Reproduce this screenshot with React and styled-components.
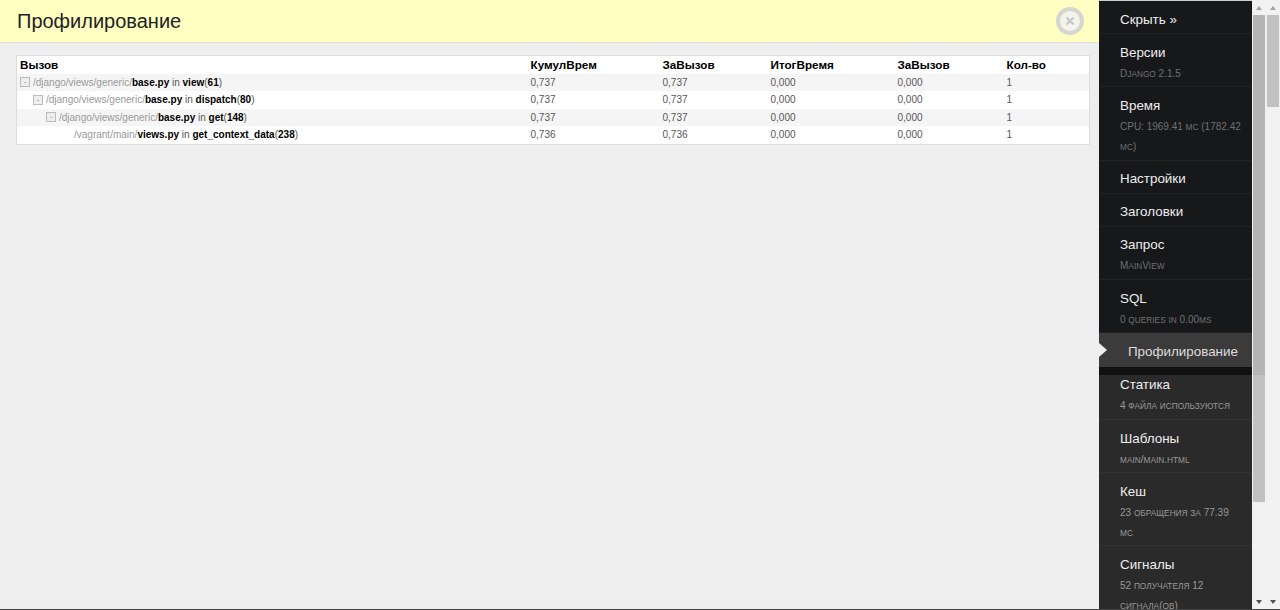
import styled, { createGlobalStyle } from 'styled-components';

const GlobalStyle = createGlobalStyle`
  html, body {
    margin: 0;
    padding: 0;
    height: 100%;
    overflow: hidden;
    background: #eee;
  }
`;

const Page = styled.div`
  display: flex;
  height: 610px;
  box-sizing: border-box;
  border-bottom: 1px solid #444;
  font-family: 'Liberation Sans', Arial, sans-serif;
  overflow: hidden;
`;
const Main = styled.main`
  flex: 1;
  min-width: 0;
  background: #eee;
`;
const Header = styled.header`
  display: flex;
  align-items: center;
  justify-content: space-between;
  height: 43px;
  box-sizing: border-box;
  padding: 0 15px 0 17px;
  background: #ffffc2;
  border-bottom: 1px solid #ddd;
`;
const Title = styled.h3`
  margin: 0;
  font-size: 20px;
  font-weight: 400;
  color: #222;
`;
const CloseButton = styled.button`
  display: flex;
  align-items: center;
  justify-content: center;
  width: 28px;
  height: 28px;
  padding: 0;
  border: 4px solid #d6d6d0;
  border-radius: 50%;
  background: #f4f4ec;
  color: #c8c8c8;
`;
const Content = styled.div`
  padding: 12px 9px 0 16px;
`;
const Table = styled.table`
  width: 100%;
  table-layout: fixed;
  border-collapse: collapse;
  background: #fff;
  border: 1px solid #ddd;
  font-size: 10px;
  color: #555;
`;
const HeadCell = styled.th`
  box-sizing: border-box;
  width: ${(p) => p.$width || 'auto'};
  height: 18px;
  padding: 0 3px;
  text-align: left;
  font-size: 11.7px;
  font-weight: 700;
  color: #000;
`;
const Row = styled.tr`
  background: ${(p) => (p.$odd ? '#f5f5f5' : '#fff')};
`;
const Cell = styled.td`
  height: 17.5px;
  padding: 0 3px;
  white-space: nowrap;
`;
const CallWrap = styled.div`
  display: flex;
  align-items: center;
  padding-left: ${(p) => p.$depth * 13}px;
`;
const Toggle = styled.span`
  display: flex;
  align-items: flex-end;
  justify-content: center;
  box-sizing: border-box;
  flex: none;
  width: 10px;
  height: 10px;
  margin-right: 3px;
  border: 1px solid #bbb;
  background: #eee;
  color: #888;
  font-size: 8px;
  line-height: 8px;
`;
const ToggleGap = styled.span`
  flex: none;
  width: 15px;
`;
const Path = styled.span`
  color: #999;
`;
const Strong = styled.b`
  color: #000;
`;
const Sidebar = styled.nav`
  flex: none;
  display: flex;
  flex-direction: column;
  width: 153px;
  overflow: hidden;
  background: #111;
  border-top: 1px solid #ccc;
  box-sizing: border-box;
`;
const Group = styled.div`
  flex: none;
  background: ${(p) => (p.$light ? '#2a2a2a' : '#17181a')};
`;
const Item = styled.div`
  padding: 7.5px 10px 2.7px 21px;
  border-bottom: 1px solid ${(p) => (p.$light ? '#323232' : '#222')};
`;
const ItemTitle = styled.div`
  font-size: 13.4px;
  line-height: 22px;
  color: #eee;
`;
const ItemSub = styled.div`
  font-size: 10px;
  line-height: 20px;
  color: ${(p) => (p.$light ? '#999' : '#707070')};
`;
const SmallCaps = styled.span`
  font-size: 8.3px;
  text-transform: uppercase;
`;
const ActiveItem = styled.div`
  position: relative;
  z-index: 1;
  flex: none;
  height: 33.6px;
  padding-left: 29px;
  background: #3b3b3b;
  box-shadow: 0 8px 0 #111;
  font-size: 13.4px;
  line-height: 38px;
  color: #ddd;
  &::before {
    content: '';
    position: absolute;
    left: 0;
    top: 10px;
    border-style: solid;
    border-width: 7px 0 7px 8px;
    border-color: transparent transparent transparent #eee;
  }
`;
const Scrollbar = styled.div`
  flex: none;
  display: flex;
  flex-direction: column;
  align-items: center;
  width: 14px;
  background: #f1f1f1;
`;
const Arrow = styled.div`
  flex: none;
  display: flex;
  align-items: center;
  justify-content: center;
  height: 15px;
  &::after {
    content: '';
    border-style: solid;
    border-color: ${(p) =>
      p.$down ? '#505050 transparent transparent' : 'transparent transparent #a3a3a3'};
    border-width: ${(p) => (p.$down ? '4px 3.5px 0' : '0 3.5px 4px')};
  }
`;
const Thumb = styled.div`
  flex: none;
  width: 12px;
  height: ${(p) => p.$height}px;
  background: ${(p) => p.$color};
`;
const Spacer = styled.div`
  flex: 1;
`;

const rows = [
  { depth: 0, dir: '/django/views/generic/', file: 'base.py', fn: 'view', line: 61, cum: '0,737', toggle: true },
  { depth: 1, dir: '/django/views/generic/', file: 'base.py', fn: 'dispatch', line: 80, cum: '0,737', toggle: true },
  { depth: 2, dir: '/django/views/generic/', file: 'base.py', fn: 'get', line: 148, cum: '0,737', toggle: true },
  { depth: 3, dir: '/vagrant/main/', file: 'views.py', fn: 'get_context_data', line: 238, cum: '0,736' },
];

const darkItems = [
  { title: 'Скрыть »' },
  { title: 'Версии', sub: 'Django 2.1.5' },
  { title: 'Время', sub: 'CPU: 1969.41 мс (1782.42 мс)' },
  { title: 'Настройки' },
  { title: 'Заголовки' },
  { title: 'Запрос', sub: 'MainView' },
  { title: 'SQL', sub: '0 queries in 0.00ms' },
];
const lightItems = [
  { title: 'Статика', sub: '4 файла используются' },
  { title: 'Шаблоны', sub: 'main/main.html' },
  { title: 'Кеш', sub: '23 обращения за 77.39 мс' },
  { title: 'Сигналы', sub: '52 получателя 12 сигнала(ов)' },
];

// lower-case runs are drawn as small capitals
const smallCaps = (text) =>
  text.split(/([a-zа-я]+)/).map((part, i) => (i % 2 ? <SmallCaps key={i}>{part}</SmallCaps> : part));

const renderItems = (items, light) =>
  items.map((item) => (
    <Item key={item.title} $light={light}>
      <ItemTitle>{item.title}</ItemTitle>
      {item.sub && <ItemSub $light={light}>{smallCaps(item.sub)}</ItemSub>}
    </Item>
  ));

export default function App() {
  return (
    <>
      <GlobalStyle />
      <Page>
        <Main>
          <Header>
            <Title>Профилирование</Title>
            <CloseButton aria-label="Закрыть">
              <svg width="10" height="10" viewBox="0 0 10 10">
                <path d="M1.5 1.5l7 7M8.5 1.5l-7 7" stroke="currentColor" strokeWidth="2.4" />
              </svg>
            </CloseButton>
          </Header>
          <Content>
            <Table>
              <thead>
                <tr>
                  <HeadCell>Вызов</HeadCell>
                  <HeadCell $width="132px">КумулВрем</HeadCell>
                  <HeadCell $width="108px">ЗаВызов</HeadCell>
                  <HeadCell $width="127px">ИтогВремя</HeadCell>
                  <HeadCell $width="109px">ЗаВызов</HeadCell>
                  <HeadCell $width="86px">Кол-во</HeadCell>
                </tr>
              </thead>
              <tbody>
                {rows.map((row, i) => (
                  <Row key={row.fn} $odd={i % 2 === 0}>
                    <Cell>
                      <CallWrap $depth={row.depth}>
                        {row.toggle ? <Toggle>-</Toggle> : <ToggleGap />}
                        <span>
                          <Path>{row.dir}</Path>
                          <Strong>{row.file}</Strong> in <Strong>{row.fn}</Strong>(<Strong>{row.line}</Strong>)
                        </span>
                      </CallWrap>
                    </Cell>
                    <Cell>{row.cum}</Cell>
                    <Cell>{row.cum}</Cell>
                    <Cell>0,000</Cell>
                    <Cell>0,000</Cell>
                    <Cell>1</Cell>
                  </Row>
                ))}
              </tbody>
            </Table>
          </Content>
        </Main>
        <Sidebar>
          <Group>{renderItems(darkItems, false)}</Group>
          <ActiveItem>Профилирование</ActiveItem>
          <Group $light>{renderItems(lightItems, true)}</Group>
        </Sidebar>
        <Scrollbar>
          <Arrow />
          <Thumb $height={360} $color="#b4b4b4" />
          <Thumb $height={127} $color="#c1c1c1" />
          <Spacer />
          <Arrow $down />
        </Scrollbar>
        <Scrollbar>
          <Arrow />
          <Thumb $height={92} $color="#c1c1c1" />
          <Spacer />
          <Arrow $down />
        </Scrollbar>
      </Page>
    </>
  );
}
